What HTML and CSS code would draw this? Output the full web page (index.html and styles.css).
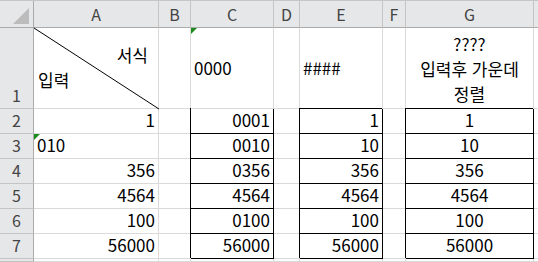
FILE: index.html
```html
<!DOCTYPE html>
<html lang="ko">
<head>
<meta charset="utf-8">
<title>서식 예제</title>
<link rel="stylesheet" href="styles.css">
</head>
<body>
<div class="sheet">
  <!-- column headers -->
  <div class="hd corner"></div>
  <div class="hd col">A</div>
  <div class="hd col">B</div>
  <div class="hd col">C</div>
  <div class="hd col">D</div>
  <div class="hd col">E</div>
  <div class="hd col">F</div>
  <div class="hd col">G</div>
  <div class="hd col"></div>

  <!-- row 1 -->
  <div class="hd row">1</div>
  <div class="c diag">
    <svg class="slash" preserveAspectRatio="none" viewBox="0 0 100 100"><line x1="0" y1="0" x2="100" y2="100" vector-effect="non-scaling-stroke"/></svg>
    <span class="fmt">서식</span>
    <span class="inp">입력</span>
  </div>
  <div class="c"></div>
  <div class="c vc flag">0000</div>
  <div class="c"></div>
  <div class="c vc">####</div>
  <div class="c"></div>
  <div class="c wrap"><span>????</span><span>입력후 가운데</span><span>정렬</span></div>
  <div class="c"></div>

  <!-- row 2 -->
  <div class="hd row">2</div>
  <div class="c r">1</div>
  <div class="c"></div>
  <div class="c r box">0001</div>
  <div class="c"></div>
  <div class="c r box">1</div>
  <div class="c"></div>
  <div class="c m box">1</div>
  <div class="c"></div>

  <!-- row 3 -->
  <div class="hd row">3</div>
  <div class="c flag">010</div>
  <div class="c"></div>
  <div class="c r box">0010</div>
  <div class="c"></div>
  <div class="c r box">10</div>
  <div class="c"></div>
  <div class="c m box">10</div>
  <div class="c"></div>

  <!-- row 4 -->
  <div class="hd row">4</div>
  <div class="c r">356</div>
  <div class="c"></div>
  <div class="c r box">0356</div>
  <div class="c"></div>
  <div class="c r box">356</div>
  <div class="c"></div>
  <div class="c m box">356</div>
  <div class="c"></div>

  <!-- row 5 -->
  <div class="hd row">5</div>
  <div class="c r">4564</div>
  <div class="c"></div>
  <div class="c r box">4564</div>
  <div class="c"></div>
  <div class="c r box">4564</div>
  <div class="c"></div>
  <div class="c m box">4564</div>
  <div class="c"></div>

  <!-- row 6 -->
  <div class="hd row">6</div>
  <div class="c r">100</div>
  <div class="c"></div>
  <div class="c r box">0100</div>
  <div class="c"></div>
  <div class="c r box">100</div>
  <div class="c"></div>
  <div class="c m box">100</div>
  <div class="c"></div>

  <!-- row 7 -->
  <div class="hd row">7</div>
  <div class="c r">56000</div>
  <div class="c"></div>
  <div class="c r box">56000</div>
  <div class="c"></div>
  <div class="c r box">56000</div>
  <div class="c"></div>
  <div class="c m box">56000</div>
  <div class="c"></div>

  <!-- row 8 (cut off) -->
  <div class="hd row"></div>
  <div class="c"></div>
  <div class="c"></div>
  <div class="c"></div>
  <div class="c"></div>
  <div class="c"></div>
  <div class="c"></div>
  <div class="c"></div>
  <div class="c"></div>
</div>
</body>
</html>
```

FILE: styles.css
```css
html, body {
  margin: 0;
  padding: 0;
  background: #fff;
}

body {
  width: 538px;
  height: 262px;
  overflow: hidden;
}

.sheet {
  display: grid;
  grid-template-columns: 34px 125px 32px 83px 26px 83px 23px 128px 1fr;
  grid-template-rows: 27px 81px repeat(6, 25px) 1fr;
  height: 262px;
  box-sizing: border-box;
  border-top: 1px solid #c6c6c6;
  font-family: "Noto Sans CJK KR", sans-serif;
  font-size: 17px;
  color: #000;
}

.sheet > div {
  box-sizing: border-box;
  display: flex;
  min-width: 0;
  border-right: 1px solid #dadada;
  border-bottom: 1px solid #dadada;
  white-space: nowrap;
}

/* headers */
.hd {
  background: #e6e7e9;
  color: #444;
  font-size: 16px;
  border-color: #c4c4c4 !important;
  justify-content: center;
}

.col {
  align-items: center;
  border-bottom-color: #ababab !important;
}

.row {
  align-items: flex-end;
  line-height: 22px;
  padding-bottom: 2px;
  border-right-color: #ababab !important;
}

.corner {
  position: relative;
  border-bottom-color: #ababab !important;
  border-right-color: #ababab !important;
}

.corner::after {
  content: "";
  position: absolute;
  right: 4px;
  bottom: 3px;
  border-left: 16px solid transparent;
  border-bottom: 16px solid #bcbcbc;
}

/* cells */
.c {
  align-items: flex-end;
  line-height: 22px;
  padding: 0 3px 2px;
}

.r { justify-content: flex-end; }
.m { justify-content: center; }

.vc {
  align-items: center;
  padding-bottom: 0;
}

.wrap {
  flex-direction: column;
  justify-content: center;
  align-items: center;
  line-height: 25px;
  padding: 0;
}

/* diagonal split header cell */
.diag {
  position: relative;
  flex-direction: column;
  justify-content: center;
  align-items: stretch;
  line-height: 25px;
  padding: 0 10px 3px 4px;
}

.diag .fmt { align-self: flex-end; }
.diag .inp { align-self: flex-start; }

.slash {
  position: absolute;
  left: 0;
  top: 0;
  width: calc(100% + 1px);
  height: calc(100% + 1px);
  overflow: visible;
}

.slash line {
  stroke: #000;
  stroke-width: 1;
}

/* text-number indicator */
.flag { position: relative; }

.flag::before {
  content: "";
  position: absolute;
  left: 0;
  top: 0;
  border-top: 6px solid #1d8a1d;
  border-right: 6px solid transparent;
}

/* bordered ranges */
.box {
  border-right-color: #000 !important;
  border-bottom-color: #000 !important;
  box-shadow: -1px -1px 0 0 #000;
}
```
